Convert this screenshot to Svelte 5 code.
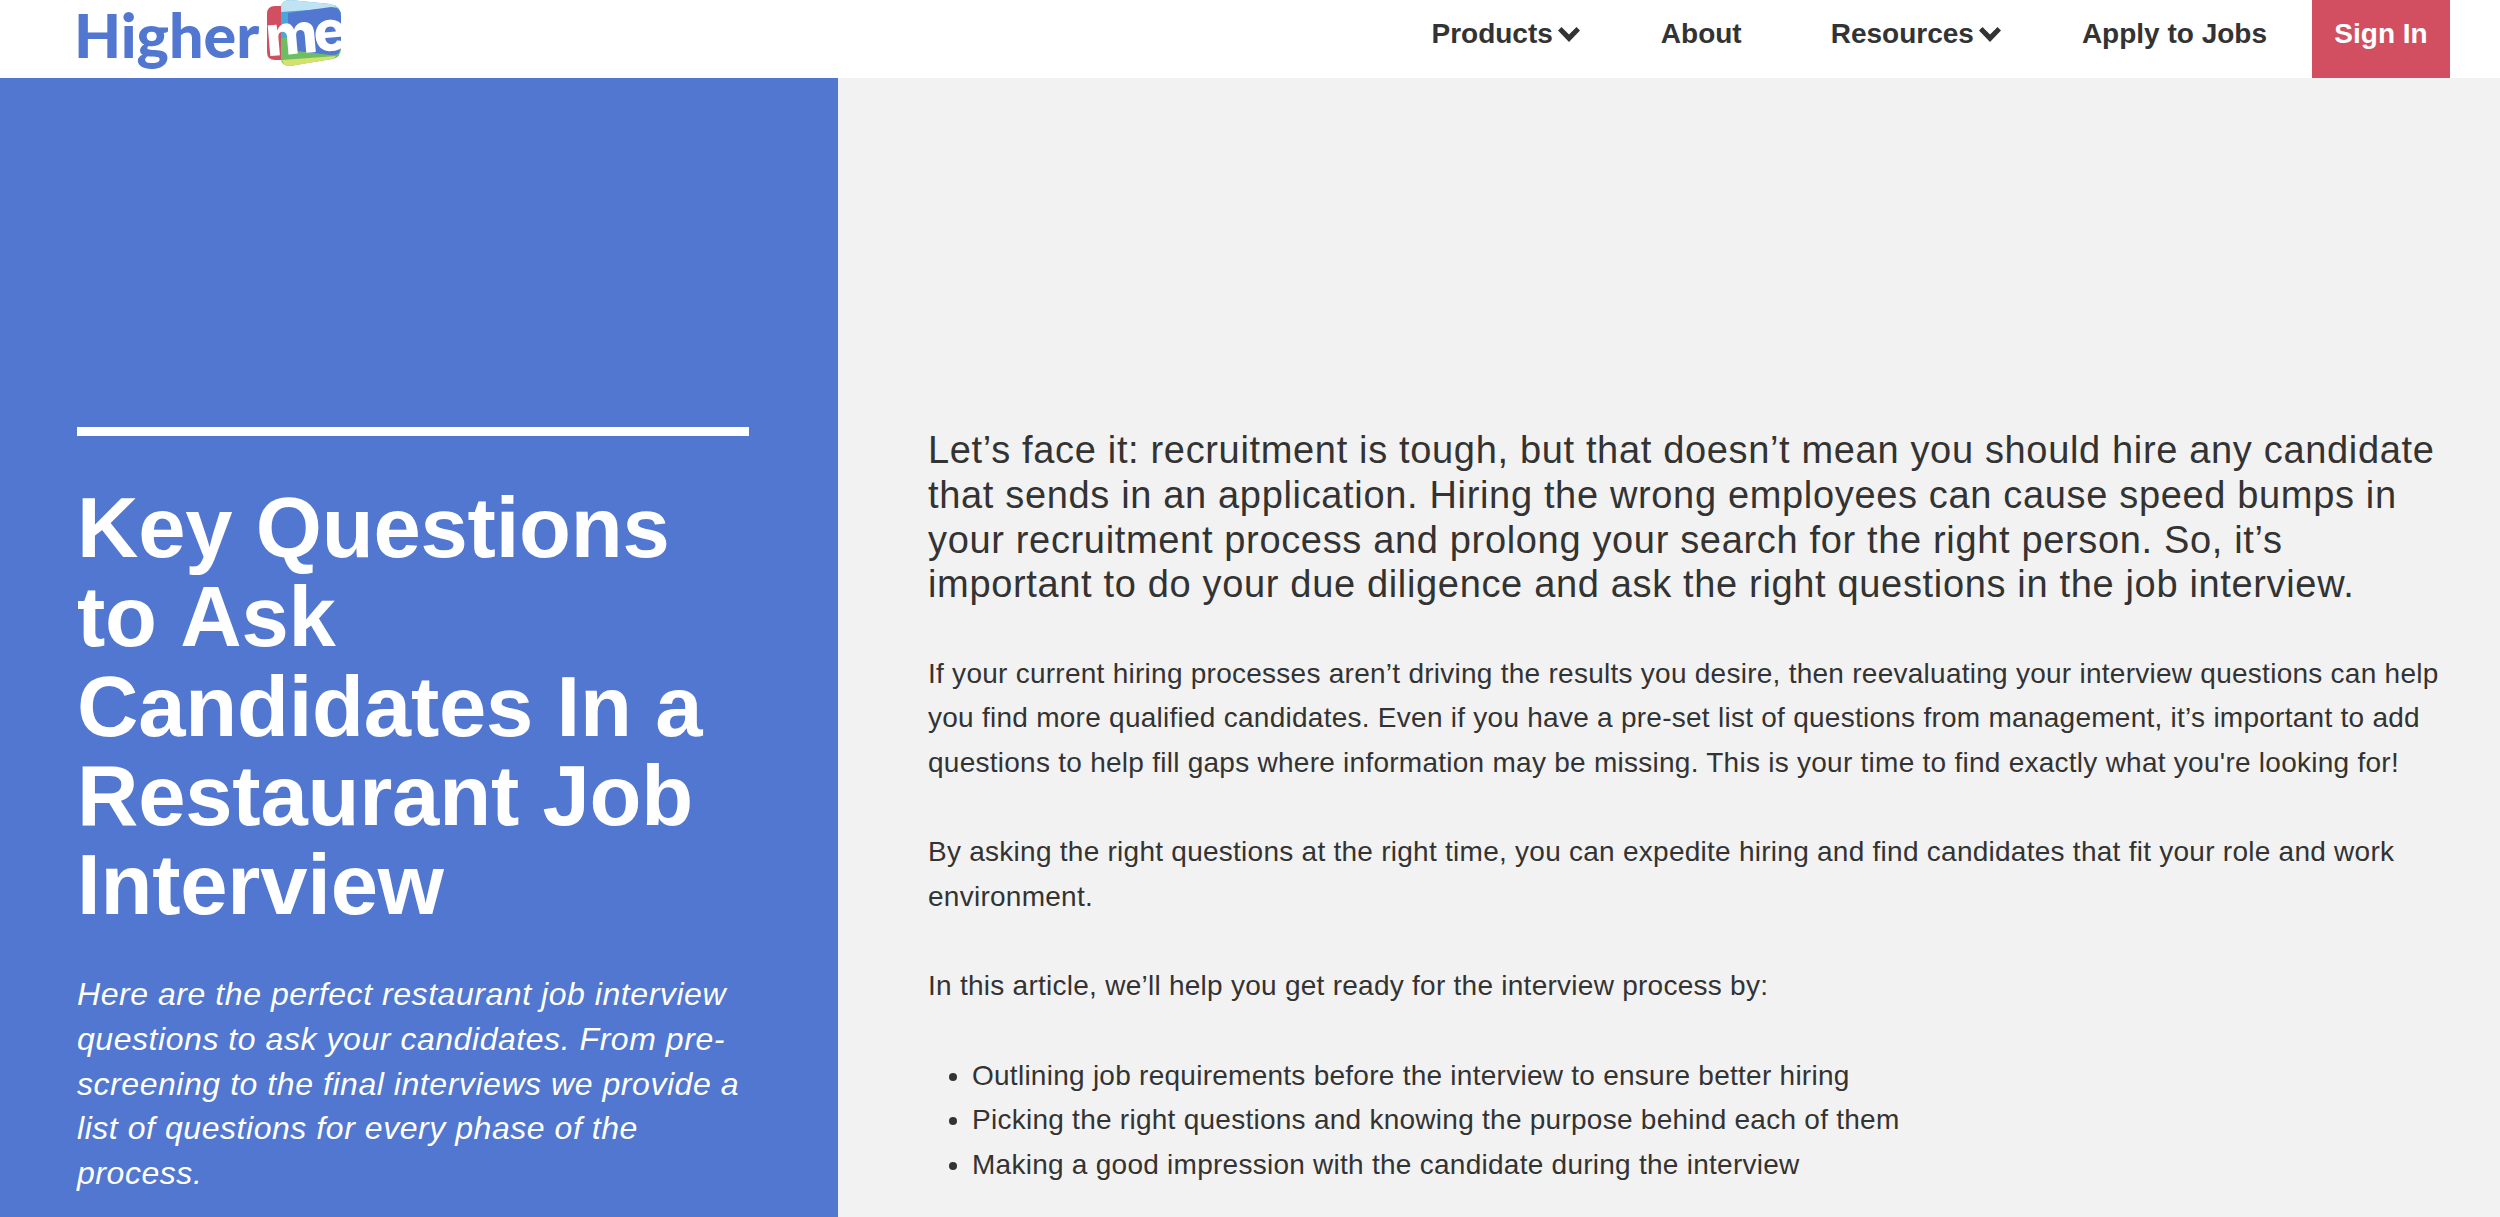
<script lang="ts">
    const navItems = [
        {label: 'Products', caret: true},
        {label: 'About', caret: false},
        {label: 'Resources', caret: true},
        {label: 'Apply to Jobs', caret: false}
    ];
    const bullets = [
        'Outlining job requirements before the interview to ensure better hiring',
        'Picking the right questions and knowing the purpose behind each of them',
        'Making a good impression with the candidate during the interview'
    ];
</script>

<div class="page">
    <header class="topbar">
        <a class="logo" href="#top">
            <span class="logo-word">Higher</span>
            <svg class="logo-mark" viewBox="0 0 78 67" width="78" height="67" aria-hidden="true">
                <path d="M9 6 H20 V60 H9 Q1 60 1 52 V14 Q1 6 9 6Z" fill="#d24f61"/>
                <path d="M15 7 Q16 0 24 0 L64 4 Q75 6 75 16 V40 H15Z" fill="#4ba6dc"/>
                <path d="M15 7 Q16 0 24 0 L64 4 Q69 5 71 8 L15 12Z" fill="#bfe3f2"/>
                <path d="M15 38 H75 V48 Q75 58 66 59 L24 66 Q15 66 15 58Z" fill="#6cbd63"/>
                <path d="M16 60 L70 56 Q69 58 66 59 L24 66 Q17 66 16 60Z" fill="#d3e26a"/>
                <path d="M22 13 L65 7 Q75 7 75 16 V45 Q75 56 65 55 L22 50Z" fill="#5177d0"/>
                <text class="logo-me" x="0" y="53" transform="rotate(-5 38 40)">me</text>
            </svg>
        </a>
        <nav class="menu">
            {#each navItems as item}
                <a class="menu-item" href="#top">
                    {item.label}{#if item.caret}<svg class="caret" viewBox="0 0 22 15" width="22" height="15" aria-hidden="true"><path d="M3.5 0 L11 7.5 L18.5 0 L22 3.5 L11 15 L0 3.5Z" fill="currentColor"/></svg>{/if}
                </a>
            {/each}
            <a class="sign-in" href="#top">Sign In</a>
        </nav>
    </header>

    <main class="content">
        <aside class="hero">
            <div class="rule"></div>
            <h1>Key Questions to&nbsp;Ask Candidates In a Restaurant Job Interview</h1>
            <p class="sub">Here are the perfect restaurant job interview questions to ask your candidates. From pre-screening to the final interviews we provide a list of questions for every phase of the process.</p>
        </aside>
        <article class="body">
            <p class="lead">Let’s face it: recruitment is tough, but that doesn’t mean you should hire any candidate that sends in an application. Hiring the wrong employees can cause speed bumps in your recruitment process and prolong your search for the right person. So, it’s important to do your due diligence and ask the right questions in the job interview.</p>
            <p>If your current hiring processes aren’t driving the results you desire, then reevaluating your interview questions can help you find more qualified candidates. Even if you have a pre-set list of questions from management, it’s important to add questions to help fill gaps where information may be missing. This is your time to find exactly what you're looking for!</p>
            <p>By asking the right questions at the right time, you can expedite hiring and find candidates that fit your role and work environment.</p>
            <p>In this article, we’ll help you get ready for the interview process by:</p>
            <ul>
                {#each bullets as bullet}
                    <li>{bullet}</li>
                {/each}
            </ul>
        </article>
    </main>
</div>

<style>
    :global(body) {
        margin: 0;
        overflow: hidden;
    }

    .page {
        height: 100vh;
        overflow: hidden;
        display: flex;
        flex-direction: column;
        font-family: "Liberation Sans", Arial, sans-serif;
        color: #333;
        background: #f2f2f2;
    }

    .topbar {
        height: 78px;
        flex: none;
        background: #fff;
        display: flex;
        justify-content: space-between;
        padding: 0 50px 0 74px;
    }

    .logo {
        display: flex;
        align-items: flex-start;
        gap: 7px;
        text-decoration: none;
    }

    .logo-word {
        font-family: Lato, sans-serif;
        font-weight: 900;
        font-size: 61px;
        line-height: 70px;
        color: #5177d0;
    }

    .logo-mark {
        display: block;
        overflow: visible;
    }

    .logo-me {
        font-family: Inter, sans-serif;
        font-weight: 800;
        font-size: 56px;
        letter-spacing: -4px;
        fill: #fff;
    }

    .menu {
        display: flex;
        align-items: stretch;
    }

    .menu-item {
        display: flex;
        align-items: flex-start;
        padding-top: 17px;
        margin-right: 81px;
        font-size: 28px;
        line-height: 34px;
        font-weight: 700;
        color: #333;
        text-decoration: none;
    }

    .menu-item:nth-child(2) {
        margin-right: 89px;
    }

    .menu-item:nth-child(4) {
        margin-right: 45px;
    }

    .caret {
        margin: 10px 0 0 5px;
    }

    .sign-in {
        width: 138px;
        padding-top: 17px;
        box-sizing: border-box;
        text-align: center;
        background: #d24f61;
        color: #fff;
        font-size: 28px;
        line-height: 34px;
        font-weight: 700;
        text-decoration: none;
    }

    .content {
        flex: 1;
        display: grid;
        grid-template-columns: 838px 1fr;
        min-height: 0;
    }

    .hero {
        background: #5177d0;
        color: #fff;
        padding: 349px 89px 0 77px;
    }

    .rule {
        height: 9px;
        background: #fff;
    }

    h1 {
        margin: 47px 0 43px;
        font-size: 85px;
        line-height: 89.3px;
        letter-spacing: -0.2px;
        font-weight: 700;
    }

    .sub {
        margin: 0;
        font-size: 32px;
        line-height: 44.6px;
        letter-spacing: 0.55px;
        font-style: italic;
    }

    .body {
        padding: 350px 58px 0 90px;
        font-size: 28px;
        line-height: 44.65px;
        letter-spacing: 0.26px;
    }

    .body p {
        margin: 0 0 44.6px;
    }

    .body .lead {
        font-size: 38px;
        line-height: 44.8px;
        letter-spacing: 0.66px;
    }

    ul {
        margin: 0;
        padding-left: 44px;
    }
</style>
